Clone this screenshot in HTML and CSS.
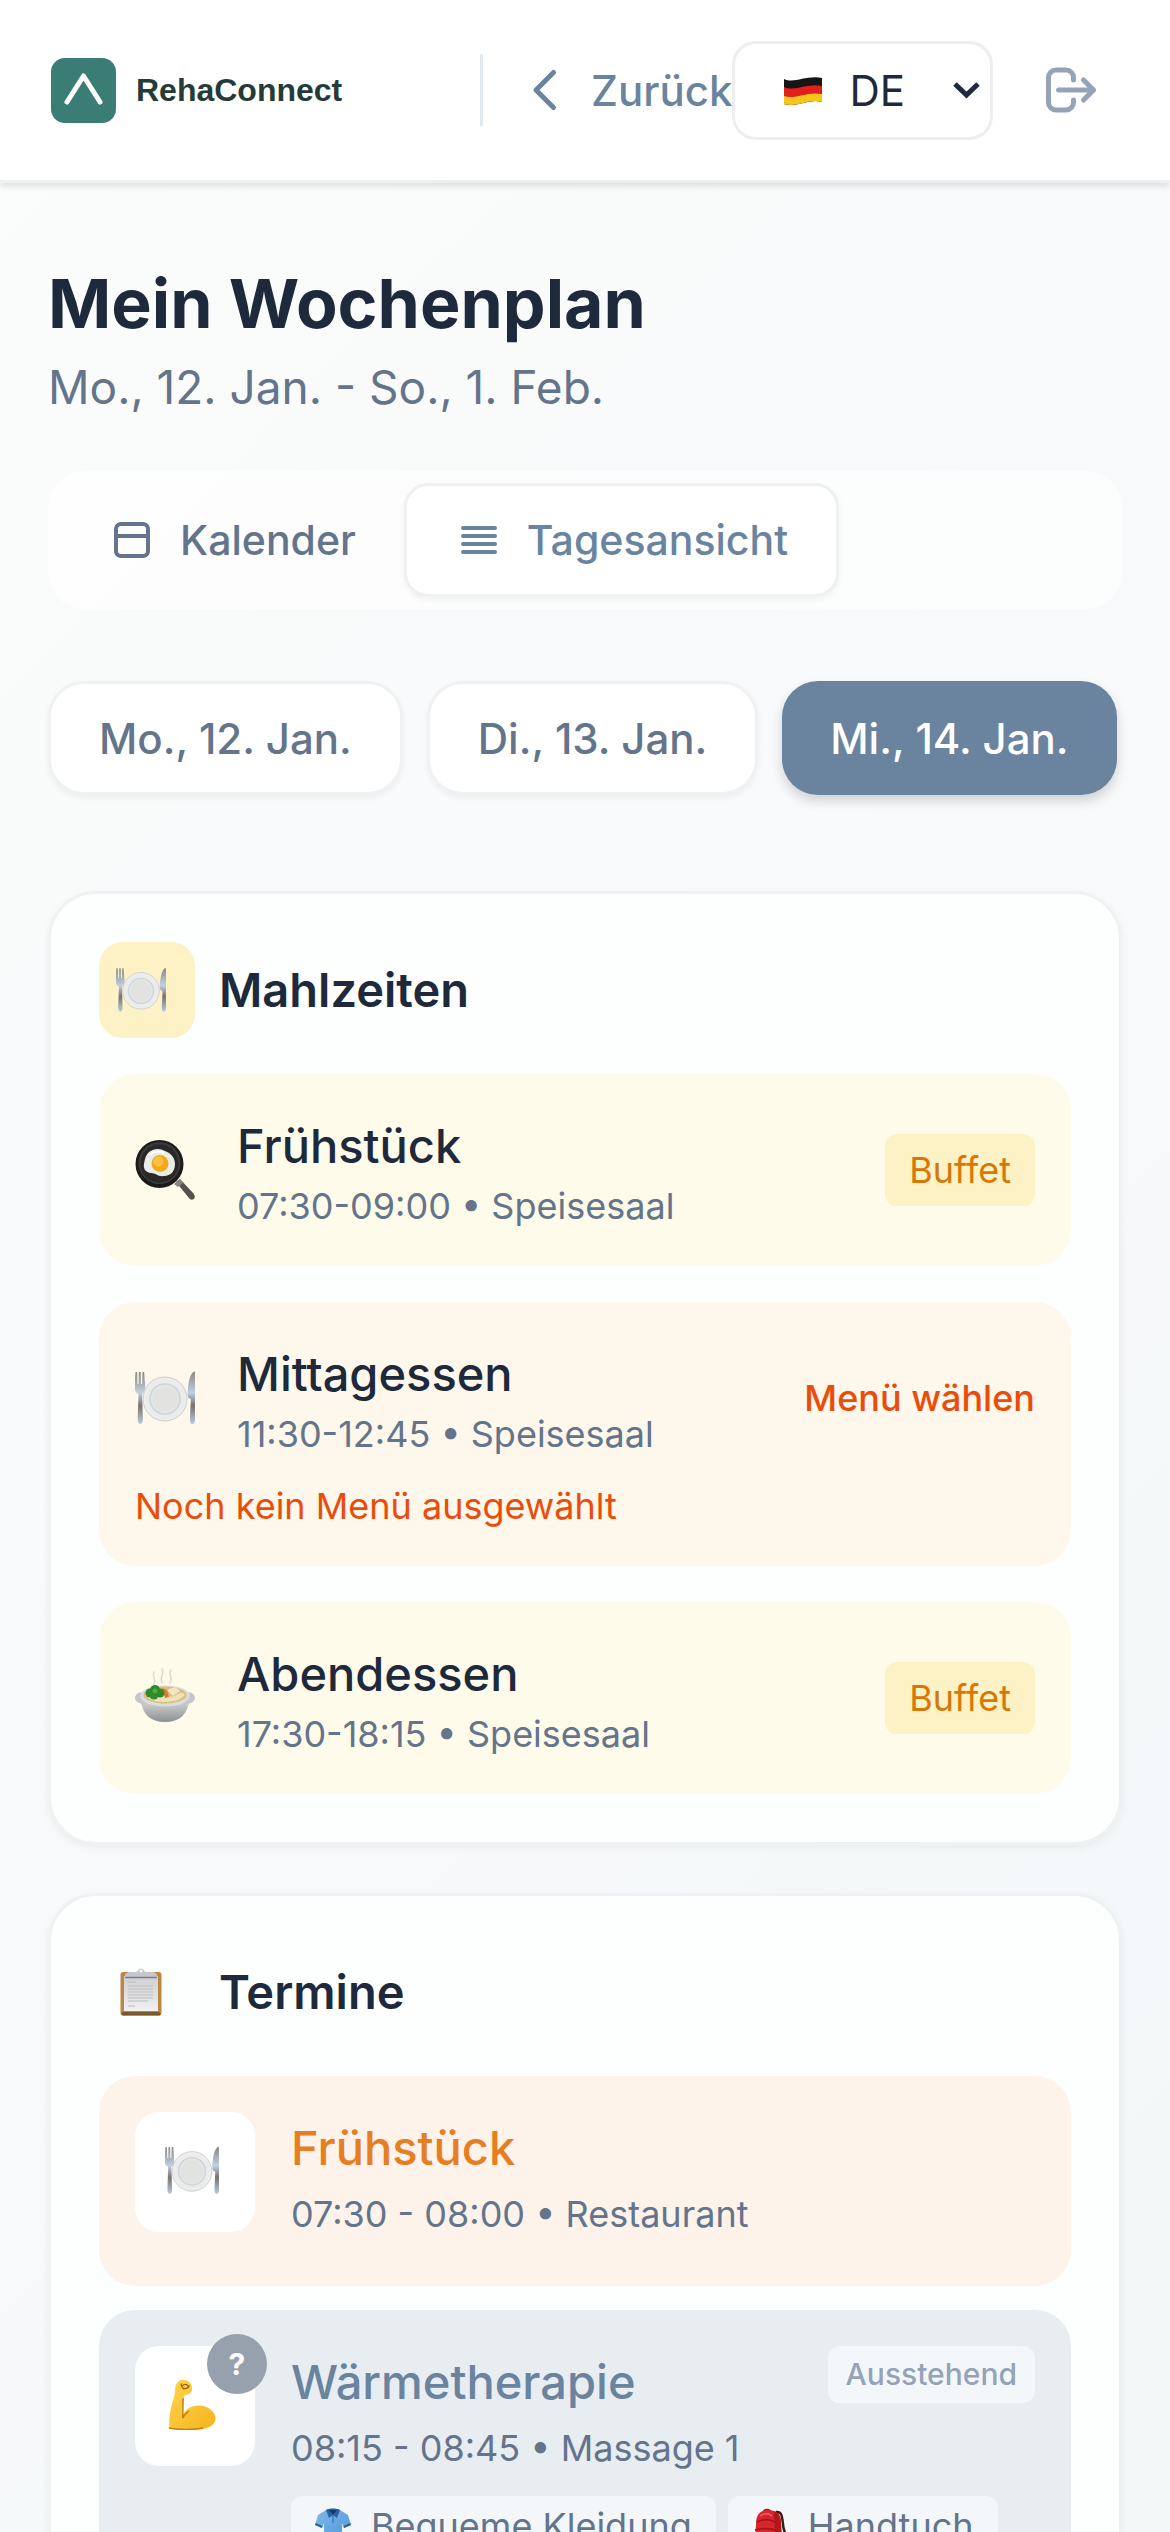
FILE: index.html
```html
<!DOCTYPE html>
<html lang="de">
<head>
    <meta charset="UTF-8">
    <meta name="viewport" content="width=device-width, initial-scale=1.0">
    <title>RehaConnect - Mein Wochenplan</title>
    <link rel="stylesheet" href="styles.css">
</head>
<body>
    <!-- shared drawings -->
    <svg class="defs" aria-hidden="true">
        <defs>
            <linearGradient id="metal" x1="0" y1="0" x2="0" y2="1">
                <stop offset="0" stop-color="#8b8782"/>
                <stop offset="0.4" stop-color="#bfd0e0"/>
                <stop offset="0.65" stop-color="#77736f"/>
                <stop offset="1" stop-color="#b9cbdb"/>
            </linearGradient>
            <radialGradient id="china">
                <stop offset="0" stop-color="#dededc"/>
                <stop offset="0.55" stop-color="#e8e8e7"/>
                <stop offset="1" stop-color="#eeeeee"/>
            </radialGradient>
            <linearGradient id="bowl" x1="0" y1="0" x2="0" y2="1">
                <stop offset="0" stop-color="#d5d7d8"/>
                <stop offset="1" stop-color="#8d9092"/>
            </linearGradient>
            <linearGradient id="skin" x1="0" y1="0" x2="1" y2="1">
                <stop offset="0" stop-color="#ffd44d"/>
                <stop offset="1" stop-color="#f5b41c"/>
            </linearGradient>
            <linearGradient id="cloth" x1="0" y1="0" x2="1" y2="1">
                <stop offset="0" stop-color="#7db9ec"/>
                <stop offset="1" stop-color="#4f95d6"/>
            </linearGradient>
            <linearGradient id="paper" x1="0" y1="0" x2="0" y2="1">
                <stop offset="0" stop-color="#cfcfd1"/>
                <stop offset="1" stop-color="#f1f1f2"/>
            </linearGradient>
        </defs>
        <symbol id="plate" viewBox="0 0 60 54">
            <g fill="url(#metal)">
                <path d="M0.5 1h1.6l.5 12h1l.3-12h1.800l.3 12h1l.5-12h1.600l1 13c.4 5-1 7.500-3 9l.8 24c.1 4-.9 6-2.600 6s-2.700-2-2.600-6l.8-24c-3-1.500-4.300-4-4-9z"/>
                <path d="M59 .5c.6 0 1 .4 1 1v46c0 4-.8 5.500-2.600 5.500S54.800 51 55 47l.8-19c-2.500-.5-3.400-2-3.200-5C53 13 54.500 3 59 .5z"/>
            </g>
            <circle cx="30" cy="28" r="22" fill="url(#china)" stroke="#c3c3c1" stroke-width="0.8"/>
            <circle cx="30" cy="28" r="15" fill="#e6e6e4" stroke="#cbd5de" stroke-width="1.600"/>
            <circle cx="30" cy="28" r="12.500" fill="#e2e2e0"/>
        </symbol>
        <symbol id="pan" viewBox="0 0 60 60">
            <path d="M41 42l4-3 13.500 14.500c2 2.500 1.500 5.500-.5 6s-3-.2-4.500-2z" fill="#55514c"/>
            <path d="M39 44l6-5 3 4-5 4z" fill="#8b8780"/>
            <circle cx="24.500" cy="24" r="24" fill="#1b1b1a"/>
            <circle cx="24.500" cy="23" r="21" fill="#3b3a38"/>
            <circle cx="24.500" cy="23.500" r="19" fill="#292827"/>
            <path d="M13 13c5-5 12-5 17-2 6 2 10 7 10 13 0 7-4 12-11 12-6 1-8-3-13-3-5-.5-8-4-7-9s1-7 4-11z" fill="#e9ede5"/>
            <path d="M15 15c4-4 10-4 14-2" fill="none" stroke="#ffffff" stroke-width="2"/>
            <circle cx="25" cy="23.500" r="8.500" fill="#f6a81d"/>
            <circle cx="23.500" cy="21.500" r="5" fill="#fbc23d"/>
        </symbol>
        <symbol id="stew" viewBox="0 4 60 60">
            <g fill="none" stroke="#dddad0" stroke-width="1.600" stroke-linecap="round">
                <path d="M19 8c-3 5 3 6 0 12"/>
                <path d="M27 5c3 5-3 7 0 14"/>
                <path d="M36 6c-4 5 3 7-1 13"/>
            </g>
            <path d="M6 36c1 14 9 22 24 22s23-8 24-22z" fill="url(#bowl)"/>
            <path d="M0 34c0-4 4-6 9-6h42c5 0 9 2 9 6 0 3-4 6-9 6H9c-5 0-9-3-9-6z" fill="#c3c7c9"/>
            <ellipse cx="30" cy="32" rx="25" ry="10.500" fill="#dadddf"/>
            <ellipse cx="30" cy="31" rx="21.500" ry="8.500" fill="#d9bd7a"/>
            <path d="M12 33c5-4 9 1 14-1s10 3 15-1 8-2 9 0c-4 5-12 7-20 7s-15-2-18-5z" fill="#efe1b9"/>
            <path d="M32 26l8-3 5 4-7 5z" fill="#f1e6c6"/>
            <path d="M27 24l5 2 2 7-4 1z" fill="#df7a35"/>
            <g fill="#2f8a2d">
                <circle cx="15" cy="29" r="4.500"/>
                <circle cx="20" cy="26" r="5"/>
                <circle cx="25" cy="29" r="4.500"/>
                <circle cx="19" cy="31" r="4.500"/>
            </g>
            <circle cx="20" cy="27" r="2.500" fill="#51ad3c"/>
        </symbol>
        <symbol id="clipboard" viewBox="0 0 42 48">
            <rect x="0.500" y="4" width="41" height="43.500" rx="3" fill="#bd8741"/>
            <rect x="1.500" y="44" width="39" height="3.500" rx="1.500" fill="#7b5a2a"/>
            <rect x="4" y="8" width="34" height="35" fill="url(#paper)"/>
            <path d="M8 14h8M8 18h25M8 21h25M8 24h25M8 27h25M8 30h25M8 33h20M8 38h7" stroke="#bdbdbf" stroke-width="1"/>
            <path d="M5 8c0-3 2-4 6-4h5c2 0 2-3.500 5-3.500S24 4 26 4h5c4 0 6 1 6 4v1.500H5z" fill="#c4c7cd"/>
            <circle cx="21" cy="3" r="1.500" fill="#fdfffe"/>
            <path d="M5 9.500h32" stroke="#7d7f84" stroke-width="1.500"/>
        </symbol>
        <symbol id="arm" viewBox="0 0 48 52">
            <path d="M8 5c2-3 5-5 8-4 4 0 7 3 8 7 1 5-2 8-6 8-1 0-2 1-2.500 3L14 38c3-7 9-11 17-11 10 0 17 7 17 13 0 8-10 12-23 12-9 0-17 0-24-2C0 38 3 27 6 17c1-4 0-8 2-12z" fill="url(#skin)"/>
            <path d="M15 20l-.5 20c1-3 3-5 6-7M1 50c8 2 25 2 34 0" fill="none" stroke="#c87f12" stroke-width="1.500" stroke-linecap="round"/>
            <path d="M14 7c2-2 5-2 6 0M15 10c3 0 5-1 6-3M13 5c0 2 1 4 3 5" fill="none" stroke="#a45f10" stroke-width="1.300" stroke-linecap="round"/>
        </symbol>
        <symbol id="shirt" viewBox="0 0 36 36">
            <path d="M11 2L3 7 0 17l7 3 2-5v20h18V15l2 5 7-3-3-10-8-5z" fill="url(#cloth)"/>
            <path d="M0 17l7 3 .5-2L.7 15zM36 17l-7 3-.5-2 6.800-3z" fill="#2a5f9c"/>
            <path d="M11 2c2-2 12-2 14 0l-3 8-4-3-4 3z" fill="#2b62a3"/>
            <path d="M14 2.500c2-1 6-1 8 0l-4 4z" fill="#173a66"/>
            <path d="M18 7v8" stroke="#3c7bbf" stroke-width="1.500"/>
        </symbol>
        <symbol id="backpack" viewBox="0 0 36 36">
            <path d="M24 4c6-1 6 5 7 12 0 8 5 10 2 19" fill="none" stroke="#3f1717" stroke-width="2.500"/>
            <path d="M11 3c1-3 7-3 8 0l-1.500 1h-5z" fill="#8d1518"/>
            <path d="M4 16C4 7 8 2 16 2c9 0 13 5 13 13l1 20H3z" fill="#d9252a"/>
            <path d="M22 3c5 2 7 6 7 12l1 20h-7z" fill="#b0181d"/>
            <path d="M5 14c6-3 12-3 18 0M3 22c7-2 13-2 20 0" fill="none" stroke="#98161b" stroke-width="1.500"/>
            <path d="M8 8c4-3 8-3 12 0" fill="none" stroke="#f16065" stroke-width="1.500"/>
        </symbol>
    </svg>

    <header class="topbar">
        <div class="logo">
            <svg class="logo-mark" viewBox="0 0 65 65" aria-hidden="true">
                <rect width="65" height="65" rx="14" fill="#3a7d74"/>
                <path d="M16 44L32.500 18 49 44" fill="none" stroke="#ffffff" stroke-width="5" stroke-linecap="round" stroke-linejoin="round"/>
            </svg>
            <span class="logo-text">RehaConnect</span>
        </div>
        <button type="button" class="back">
            <svg class="icon" viewBox="0 0 24 24"><path d="M15 19l-7-7 7-7"/></svg>
            Zurück
        </button>
        <div class="topbar-right">
            <div class="language">
                <svg class="flag" viewBox="0 0 38 28" aria-hidden="true">
                    <clipPath id="wave"><path d="M0 2c10 5 22-4 38-1v24c-13-4-25 6-38 2z"/></clipPath>
                    <g clip-path="url(#wave)">
                        <rect width="38" height="28" fill="#161414"/>
                        <path d="M0 10c11 5 23-4 38-1v19H0z" fill="#e0201c"/>
                        <path d="M0 19c11 4 23-5 38-2v11H0z" fill="#f6c51c"/>
                    </g>
                </svg>
                <select class="language-select" aria-label="Sprache">
                    <option>DE</option>
                    <option>EN</option>
                </select>
                <svg class="caret" viewBox="0 0 27 18" aria-hidden="true"><path d="M2 3l11.500 11L25 3"/></svg>
            </div>
            <button type="button" class="logout" aria-label="Abmelden">
                <svg class="icon" viewBox="0 0 24 24"><path d="M17 16l4-4m0 0l-4-4m4 4H7m6 4v1a3 3 0 01-3 3H6a3 3 0 01-3-3V7a3 3 0 013-3h4a3 3 0 013 3v1"/></svg>
            </button>
        </div>
    </header>

    <main>
        <h1>Mein Wochenplan</h1>
        <p class="range">Mo., 12. Jan. - So., 1. Feb.</p>

        <div class="tabs">
            <button type="button" class="tab">
                <svg class="tab-icon" viewBox="0 0 48 48"><rect x="8" y="8" width="32" height="32" rx="5"/><path d="M8 20h32"/></svg>
                Kalender
            </button>
            <button type="button" class="tab active">
                <svg class="tab-icon" viewBox="0 0 48 48"><path d="M8 12h32M8 20h32M8 28h32M8 36h32"/></svg>
                Tagesansicht
            </button>
        </div>

        <div class="days">
            <button type="button" class="day">Mo., 12. Jan.</button>
            <button type="button" class="day">Di., 13. Jan.</button>
            <button type="button" class="day selected">Mi., 14. Jan.</button>
        </div>

        <section class="card">
            <div class="card-head">
                <span class="tile yellow"><svg class="emoji-small"><use href="#plate"/></svg></span>
                <h2>Mahlzeiten</h2>
            </div>
            <div class="meals">
                <div class="meal">
                    <div class="meal-row">
                        <svg class="emoji"><use href="#pan"/></svg>
                        <div class="meal-info">
                            <h3>Frühstück</h3>
                            <p>07:30-09:00 • Speisesaal</p>
                        </div>
                        <span class="buffet">Buffet</span>
                    </div>
                </div>
                <div class="meal open">
                    <div class="meal-row">
                        <svg class="emoji"><use href="#plate"/></svg>
                        <div class="meal-info">
                            <h3>Mittagessen</h3>
                            <p>11:30-12:45 • Speisesaal</p>
                        </div>
                        <button type="button" class="choose">Menü wählen</button>
                    </div>
                    <p class="note">Noch kein Menü ausgewählt</p>
                </div>
                <div class="meal">
                    <div class="meal-row">
                        <svg class="emoji"><use href="#stew"/></svg>
                        <div class="meal-info">
                            <h3>Abendessen</h3>
                            <p>17:30-18:15 • Speisesaal</p>
                        </div>
                        <span class="buffet">Buffet</span>
                    </div>
                </div>
            </div>
        </section>

        <section class="card">
            <div class="card-head">
                <span class="tile"><svg class="emoji-small"><use href="#clipboard"/></svg></span>
                <h2>Termine</h2>
            </div>
            <div class="appointments">
                <div class="appointment food">
                    <div class="avatar"><svg class="emoji-medium"><use href="#plate"/></svg></div>
                    <div class="appointment-info">
                        <h3>Frühstück</h3>
                        <p>07:30 - 08:00 • Restaurant</p>
                    </div>
                </div>
                <div class="appointment therapy">
                    <div class="avatar">
                        <svg class="emoji-medium"><use href="#arm"/></svg>
                        <span class="unknown">?</span>
                    </div>
                    <div class="appointment-info">
                        <div class="appointment-head">
                            <h3>Wärmetherapie</h3>
                            <span class="status">Ausstehend</span>
                        </div>
                        <p>08:15 - 08:45 • Massage 1</p>
                        <div class="tags">
                            <span class="tag"><svg class="tag-icon"><use href="#shirt"/></svg>Bequeme Kleidung</span>
                            <span class="tag"><svg class="tag-icon"><use href="#backpack"/></svg>Handtuch</span>
                        </div>
                    </div>
                </div>
            </div>
        </section>
    </main>
</body>
</html>
```
FILE: styles.css
```css
* {
    box-sizing: border-box;
}
body {
    margin: 0;
    height: 100vh;
    display: flex;
    flex-direction: column;
    font-family: Inter, "Liberation Sans", sans-serif;
    font-size: 42px;
    color: #1e293b;
    background: linear-gradient(135deg, #fafdfb 0%, #f8f9fb 50%, #f2f7f8 100%);
}
h1, h2, h3, p {
    margin: 0;
}
button, select {
    font: inherit;
    color: inherit;
    background: none;
    border: none;
    padding: 0;
    cursor: pointer;
}
.defs {
    position: absolute;
    width: 0;
    height: 0;
}
.icon {
    width: 60px;
    height: 60px;
    fill: none;
    stroke: currentColor;
    stroke-width: 2;
    stroke-linecap: round;
    stroke-linejoin: round;
}

/* top bar */
.topbar {
    flex: none;
    display: flex;
    align-items: center;
    min-height: 183px;
    padding: 0 48px;
    background: #ffffff;
    border-bottom: 3px solid #eeeff0;
    box-shadow: 0 3px 6px rgba(0, 0, 0, 0.12);
    z-index: 1;
}
.logo {
    flex: none;
    display: flex;
    align-items: center;
    gap: 20px;
    width: 435px;
    height: 72px;
    padding-left: 3px;
    border-right: 3px solid #e2e8f0;
}
.logo-mark {
    width: 65px;
    height: 65px;
}
.logo-text {
    font-family: "Liberation Sans", Arial, sans-serif;
    font-size: 32px;
    font-weight: bold;
    color: #243b37;
}
.back {
    flex: none;
    display: flex;
    align-items: center;
    gap: 15px;
    margin-left: 33px;
    font-weight: 500;
    color: #6a84a0;
}
.topbar-right {
    display: flex;
    align-items: center;
    gap: 24px;
    margin-left: auto;
}
.language {
    position: relative;
}
.language-select {
    appearance: none;
    display: block;
    width: 261px;
    height: 99px;
    padding-left: 114px;
    border: 3px solid #eeeeee;
    border-radius: 24px;
    background: #ffffff;
}
.flag {
    position: absolute;
    left: 52px;
    top: 36px;
    width: 38px;
    height: 28px;
}
.caret {
    position: absolute;
    right: 13px;
    top: 40px;
    width: 27px;
    height: 18px;
    fill: none;
    stroke: #1e293b;
    stroke-width: 5;
    pointer-events: none;
}
.logout {
    display: flex;
    padding: 24px;
    color: #94a3b8;
}

/* heading and day picker */
main {
    flex: 1;
    overflow-y: auto;
    scrollbar-width: none;
    padding: 72px 48px;
}
h1 {
    font-size: 68px;
    line-height: 96px;
    font-weight: 700;
}
.range {
    font-size: 46px;
    line-height: 72px;
    color: #64748b;
}
.tabs {
    display: flex;
    margin-top: 48px;
    padding: 12px;
    border-radius: 36px;
    background: rgba(255, 255, 255, 0.6);
}
.tab {
    display: flex;
    align-items: center;
    gap: 24px;
    height: 114px;
    padding: 0 48px;
    border-radius: 24px;
    font-size: 41px;
    font-weight: 500;
    color: #64748b;
}
.tab.active {
    background: #ffffff;
    border: 3px solid #eff0f1;
    box-shadow: 0 3px 6px rgba(0, 0, 0, 0.05);
    color: #6a84a0;
}
.tab-icon {
    width: 48px;
    height: 48px;
    fill: none;
    stroke: currentColor;
    stroke-width: 4;
    stroke-linecap: round;
}
.days {
    display: flex;
    gap: 24px;
    margin: 72px 0 96px;
}
.day {
    flex: none;
    height: 114px;
    padding: 0 48px;
    border: 3px solid #f0f1f2;
    border-radius: 36px;
    background: #ffffff;
    box-shadow: 0 3px 6px rgba(0, 0, 0, 0.05);
    font-weight: 500;
    color: #64748b;
}
.day.selected {
    background: #6a84a0;
    border: none;
    box-shadow: 0 6px 12px rgba(0, 0, 0, 0.16);
    color: #ffffff;
}

/* cards */
.card {
    margin-bottom: 48px;
    padding: 48px;
    border: 3px solid #eff1f2;
    border-radius: 48px;
    background: #fdfffe;
    box-shadow: 0 3px 9px rgba(0, 0, 0, 0.05);
}
.card-head {
    display: flex;
    align-items: center;
    gap: 24px;
    margin-bottom: 36px;
}
.tile {
    display: flex;
    align-items: center;
    width: 96px;
    height: 96px;
    padding-left: 17px;
    border-radius: 24px;
}
.tile.yellow {
    background: #fdf2c5;
}
.emoji-small {
    width: 50px;
    height: 48px;
}
.emoji-medium {
    width: 54px;
    height: 51px;
}
.emoji {
    flex: none;
    width: 60px;
    height: 60px;
}
h2 {
    font-size: 47px;
    line-height: 72px;
    font-weight: 600;
}
h3 {
    font-size: 47px;
    line-height: 72px;
    font-weight: 500;
}
.meal-info p, .appointment-info p {
    font-size: 36px;
    line-height: 48px;
    color: #64748b;
}

/* meals */
.meals {
    display: flex;
    flex-direction: column;
    gap: 36px;
}
.meal {
    padding: 36px;
    border-radius: 36px;
    background: #fffbea;
}
.meal.open {
    background: #fef7ec;
}
.meal-row {
    display: flex;
    align-items: center;
}
.meal-info {
    flex: 1;
    margin-left: 42px;
}
.buffet {
    padding: 12px 24px;
    border-radius: 12px;
    background: #fdf2c5;
    font-size: 36px;
    line-height: 48px;
    color: #d97706;
}
.choose {
    font-size: 36px;
    line-height: 48px;
    font-weight: 500;
    color: #ea4c0a;
}
.note {
    margin-top: 24px;
    font-size: 36px;
    line-height: 48px;
    color: #ea4c0a;
}

/* appointments */
.appointments {
    display: flex;
    flex-direction: column;
    gap: 24px;
}
.appointment {
    display: flex;
    align-items: flex-start;
    gap: 36px;
    padding: 36px;
    border-radius: 36px;
}
.appointment.food {
    background: #fdf3eb;
}
.appointment.food h3 {
    color: #e67e22;
}
.appointment.therapy {
    background: #e8edf1;
}
.appointment.therapy h3 {
    color: #6a84a0;
}
.avatar {
    flex: none;
    position: relative;
    display: flex;
    align-items: center;
    justify-content: center;
    width: 120px;
    height: 120px;
    padding: 0 6px 4px 0;
    border-radius: 24px;
    background: #ffffff;
}
.unknown {
    position: absolute;
    top: -12px;
    right: -12px;
    width: 60px;
    height: 60px;
    border-radius: 50%;
    background: #97a1ae;
    color: #ffffff;
    font-size: 30px;
    line-height: 60px;
    font-weight: 700;
    text-align: center;
}
.appointment-info {
    flex: 1;
}
.appointment-info p {
    margin: 6px 0 12px;
}
.appointment-head {
    display: flex;
    align-items: flex-start;
    justify-content: space-between;
}
.status {
    padding: 6px 18px;
    border-radius: 12px;
    background: #f4f7f9;
    font-size: 30px;
    line-height: 45px;
    font-weight: 500;
    color: #94a3b8;
}
.tags {
    display: flex;
    flex-wrap: wrap;
    gap: 12px;
    margin-top: 24px;
}
.tag {
    display: flex;
    align-items: center;
    gap: 20px;
    padding: 6px 24px;
    border-radius: 12px;
    background: #f4f7f9;
    font-size: 36px;
    line-height: 48px;
    color: #64748b;
}
.tag-icon {
    width: 36px;
    height: 36px;
}
```
